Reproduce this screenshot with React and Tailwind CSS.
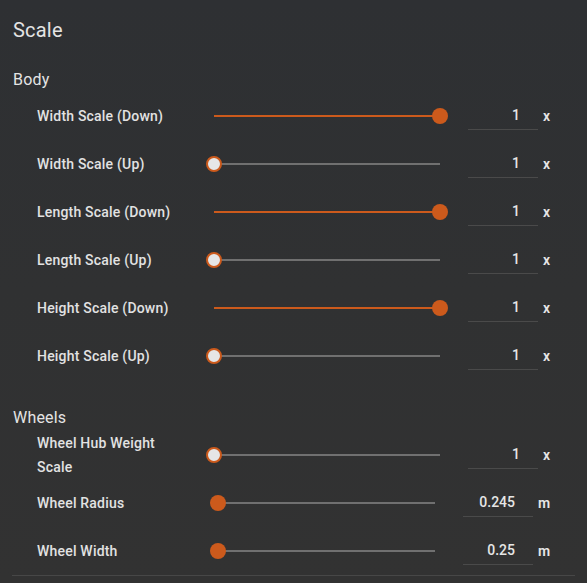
import React from 'react'

// one slider + number field row
const Row = ({ label, value, unit, full, filledThumb, wide }) => {
  return (
    <div className="flex h-[48px] items-center pl-[37px]">
      <div className={wide ? "w-[173px] text-[14px] leading-[24px] font-medium tracking-[0.2px] text-[#e2e2e2]" : "w-[169px] text-[14px] leading-[24px] font-medium tracking-[0.2px] text-[#e2e2e2]"}>
        {label}
      </div>
      <div className={wide ? "relative h-[16px] w-[233px]" : "relative h-[16px] w-[242px]"}>
        <div className={full ? "absolute left-[8px] right-[8px] top-[7px] h-[2px] bg-[#cc5a1c]" : "absolute left-[8px] right-[8px] top-[7px] h-[2px] bg-[#707070]"} />
        {full ? (
          <div className="absolute right-0 top-0 h-[16px] w-[16px] rounded-full bg-[#cc5a1c]" />
        ) : filledThumb ? (
          <div className="absolute left-0 top-0 h-[16px] w-[16px] rounded-full bg-[#cc5a1c]" />
        ) : (
          <div className="absolute left-0 top-0 h-[16px] w-[16px] rounded-full border-2 border-[#cc5a1c] bg-[#e6e6e6]" />
        )}
      </div>
      <div className="ml-[20px] flex h-[28px] w-[70px] items-center justify-end border-b border-[#4a4a4a] pr-[18px] text-[14px] font-medium text-[#e6e6e6]">
        {value}
      </div>
      <div className="ml-[5px] text-[14px] font-semibold text-[#e6e6e6]">{unit}</div>
    </div>
  )
}

const App = () => {
  return (
    <div className="h-[583px] w-[587px] overflow-hidden bg-gradient-to-b from-[#2e3033] via-[#303132] to-[#323232] font-['Roboto',sans-serif]">
      <div className="px-[13px] pt-[16px]">
        <h2 className="h-[28px] text-[20px] leading-[28px] tracking-[0.2px] text-[#e4e4e4]">Scale</h2>

        <h3 className="mt-[24px] h-[24px] text-[16px] leading-[24px] tracking-[0.2px] text-[#e4e4e4]">Body</h3>
      </div>
      <div>
        <Row label="Width Scale (Down)" value="1" unit="x" full />
        <Row label="Width Scale (Up)" value="1" unit="x" />
        <Row label="Length Scale (Down)" value="1" unit="x" full />
        <Row label="Length Scale (Up)" value="1" unit="x" />
        <Row label="Height Scale (Down)" value="1" unit="x" full />
        <Row label="Height Scale (Up)" value="1" unit="x" />
      </div>

      <h3 className="mt-[26px] h-[24px] px-[13px] text-[16px] leading-[24px] tracking-[0.2px] text-[#e4e4e4]">Wheels</h3>
      <div className="mt-[1px]">
        <Row label={<>Wheel Hub Weight<br />Scale</>} value="1" unit="x" />
        <Row label="Wheel Radius" value="0.245" unit="m" wide filledThumb />
        <Row label="Wheel Width" value="0.25" unit="m" wide filledThumb />
      </div>
      <div className="mx-[12px] h-px bg-[#474747]" />
    </div>
  )
}

export default App
